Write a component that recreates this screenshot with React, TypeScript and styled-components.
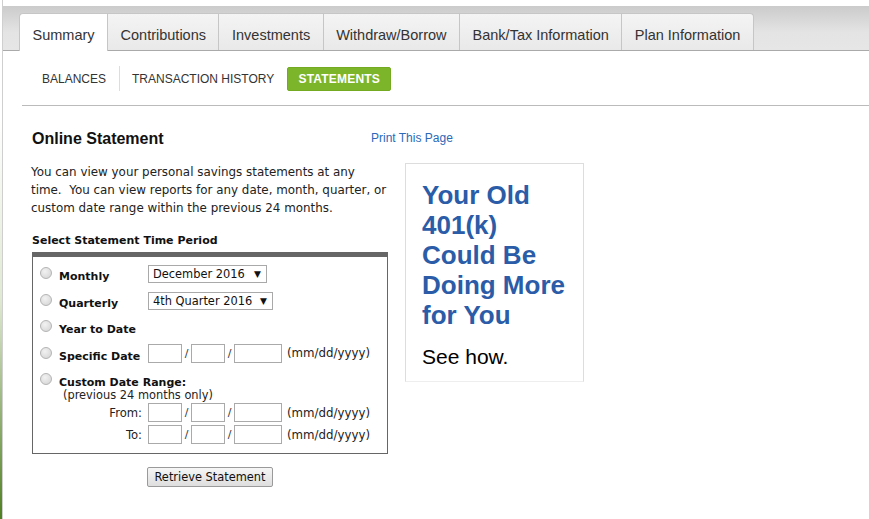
import React from "react";
import styled, { createGlobalStyle } from "styled-components";

const GlobalStyle = createGlobalStyle`
  html, body {
    margin: 0;
    padding: 0;
  }
  body {
    background: linear-gradient(to bottom, #ffffff 0, #ffffff 120px, #dfe9d2 300px, #4f7f22 519px);
    font-family: "Liberation Sans", Arial, sans-serif;
    color: #333;
  }
`;

const Page = styled.div`
  margin-left: 2px;
  min-height: 519px;
  background: #fff;
  border-left: 1px solid #cfcfcf;
  padding-top: 6px;
  box-sizing: border-box;
`;

const TabBar = styled.div`
  height: 45px;
  box-sizing: border-box;
  padding: 8px 0 0 16px;
  background: linear-gradient(to bottom, #cbcbcb, #e4e4e4 60%, #e6e6e6);
  border-bottom: 1px solid #aaa;
  display: flex;
  align-items: flex-end;
`;

const Tab = styled.div<{ $active?: boolean; $first?: boolean; $last?: boolean }>`
  box-sizing: border-box;
  padding: 5px 12.5px 0;
  display: flex;
  align-items: center;
  font-size: 14.5px;
  color: #333;
  border: 1px solid #c6c6c6;
  border-left: ${(p) => (p.$first ? "1px solid #c6c6c6" : "none")};
  border-bottom: none;
  border-radius: ${(p) => (p.$first ? "4px 0 0 0" : p.$last ? "0 4px 0 0" : "0")};
  background: ${(p) => (p.$active ? "#fff" : "linear-gradient(to bottom, #f4f4f4, #e9e9e9)")};
  margin-bottom: ${(p) => (p.$active ? "-1px" : "0")};
  height: ${(p) => (p.$active ? "38px" : "37px")};
`;

const SubNav = styled.div`
  display: flex;
  align-items: center;
  padding: 15px 0 0 39px;
  height: 25px;
`;

const SubLink = styled.div<{ $divider?: boolean }>`
  font-size: 12px;
  color: #333;
  text-transform: uppercase;
  padding-right: ${(p) => (p.$divider ? "13px" : "0")};
  margin-right: ${(p) => (p.$divider ? "12px" : "13px")};
  height: 25px;
  display: flex;
  align-items: center;
  border-right: ${(p) => (p.$divider ? "1px solid #ddd" : "none")};
`;

const SubActive = styled.div`
  font-size: 12px;
  font-weight: bold;
  color: #fff;
  background: #7db52a;
  border: 1px solid #74aa22;
  border-radius: 2px;
  height: 24px;
  box-sizing: border-box;
  width: 104px;
  display: flex;
  align-items: center;
  justify-content: center;
  letter-spacing: 0.2px;
`;

const Rule = styled.div`
  margin: 14px 0 0 19px;
  border-top: 1px solid #bbb;
`;

const Content = styled.div`
  padding: 23px 0 0 29px;
`;

const HeadRow = styled.div`
  display: grid;
  grid-template-columns: 339px auto;
  align-items: start;
`;

const Title = styled.h2`
  margin: 0;
  font-size: 16px;
  line-height: 19px;
  font-weight: bold;
  color: #111;
`;

const PrintLink = styled.a`
  margin-top: 2px;
  font-size: 12px;
  line-height: 14px;
  color: #2a6ab8;
  text-decoration: none;
`;

const Columns = styled.div`
  display: flex;
  gap: 17px;
  margin-top: 15px;
  align-items: flex-start;
`;

const LeftCol = styled.div`
  width: 356px;
`;

const Intro = styled.p`
  margin: 0 0 0 -1px;
  font-family: "DejaVu Sans", Verdana, sans-serif;
  font-size: 11.9px;
  line-height: 18px;
  color: #222;
  width: 362px;
`;

const SectionLabel = styled.div`
  margin-top: 17px;
  font-family: "DejaVu Sans", Verdana, sans-serif;
  font-size: 11px;
  font-weight: bold;
  color: #111;
`;

const PeriodBox = styled.div`
  margin-top: 5px;
  border: 1px solid #666;
  border-top: 5px solid #666;
  padding: 6px 0 7px 6px;
  display: flex;
  flex-direction: column;
`;

const OptionRow = styled.div`
  display: flex;
  align-items: flex-start;
  height: 26.5px;
`;

const Radio = styled.span`
  width: 12px;
  height: 12px;
  border-radius: 50%;
  box-sizing: border-box;
  border: 1px solid #b4b4b4;
  background: radial-gradient(circle at 40% 35%, #f2f2f2, #d2d2d2);
  margin: 4px 7px 0 1px;
`;

const OptLabel = styled.span<{ $auto?: boolean }>`
  font-family: "DejaVu Sans", Verdana, sans-serif;
  font-size: 11px;
  font-weight: bold;
  color: #111;
  width: ${(p) => (p.$auto ? "auto" : "89px")};
  margin-top: 7px;
`;

const FakeSelect = styled.div<{ $w: number }>`
  width: ${(p) => p.$w}px;
  height: 18px;
  margin-top: 2px;
  box-sizing: border-box;
  border: 1px solid #a9a9a9;
  display: flex;
  align-items: center;
  justify-content: space-between;
  padding: 0 5px 0 4px;
  font-family: "DejaVu Sans", Verdana, sans-serif;
  font-size: 11.4px;
  color: #111;
  span {
    font-size: 9px;
  }
`;

const Fields = styled.div<{ $top?: number }>`
  display: flex;
  align-items: center;
  margin-top: ${(p) => p.$top ?? 0}px;
`;

const DateInput = styled.div<{ $w: number }>`
  width: ${(p) => p.$w}px;
  height: 19px;
  box-sizing: border-box;
  border: 1px solid #aaa;
  background: #fff;
`;

const Slash = styled.span`
  font-family: "DejaVu Sans", Verdana, sans-serif;
  font-size: 11px;
  color: #333;
  width: 9px;
  text-align: center;
`;

const Hint = styled.span`
  font-family: "DejaVu Sans", Verdana, sans-serif;
  font-size: 11.8px;
  color: #222;
  margin-left: 5px;
`;

const SubNote = styled.div`
  font-family: "DejaVu Sans", Verdana, sans-serif;
  font-size: 11.4px;
  line-height: 13px;
  color: #222;
  padding-left: 24px;
  margin-top: -7px;
`;

const RangeRow = styled.div`
  display: flex;
  align-items: center;
  height: 22px;
`;

const RangeLabel = styled.span`
  width: 109px;
  text-align: right;
  padding-right: 6px;
  box-sizing: border-box;
  font-family: "DejaVu Sans", Verdana, sans-serif;
  font-size: 11.6px;
  color: #222;
`;

const ButtonRow = styled.div`
  display: flex;
  justify-content: center;
  margin-top: 13px;
`;

const Button = styled.button`
  width: 126px;
  height: 20px;
  padding: 0;
  border: 1px solid #9a9a9a;
  border-radius: 2px;
  background: linear-gradient(to bottom, #f6f6f6, #dedede);
  font-family: "DejaVu Sans", Verdana, sans-serif;
  font-size: 11.4px;
  color: #111;
`;

const Promo = styled.div`
  width: 179px;
  height: 219px;
  box-sizing: border-box;
  border: 1px solid #ddd;
  border-bottom-color: #eee;
  padding: 16px 10px 0 16px;
`;

const PromoHead = styled.div`
  font-size: 26px;
  font-weight: bold;
  line-height: 30px;
  color: #2a5ca8;
`;

const PromoSub = styled.div`
  margin-top: 15px;
  font-size: 21px;
  color: #000;
`;

const tabs = ["Summary", "Contributions", "Investments", "Withdraw/Borrow", "Bank/Tax Information", "Plan Information"];

const DateFields = ({ top }: { top?: number }) => (
  <Fields $top={top}>
    <DateInput $w={34} />
    <Slash>/</Slash>
    <DateInput $w={34} />
    <Slash>/</Slash>
    <DateInput $w={48} />
    <Hint>(mm/dd/yyyy)</Hint>
  </Fields>
);

const App = () => {
  return (
    <>
      <GlobalStyle />
      <Page>
        <TabBar>
          {tabs.map((t, i) => (
            <Tab key={t} $active={i === 0} $first={i === 0} $last={i === tabs.length - 1}>
              {t}
            </Tab>
          ))}
        </TabBar>
        <SubNav>
          <SubLink $divider>Balances</SubLink>
          <SubLink>Transaction History</SubLink>
          <SubActive>STATEMENTS</SubActive>
        </SubNav>
        <Rule />
        <Content>
          <HeadRow>
            <Title>Online Statement</Title>
            <PrintLink href="#">Print This Page</PrintLink>
          </HeadRow>
          <Columns>
            <LeftCol>
              <Intro>
                You can view your personal savings statements at any time.&nbsp; You can view reports for any date,
                month, quarter, or custom date range within the previous 24 months.
              </Intro>
              <SectionLabel>Select Statement Time Period</SectionLabel>
              <PeriodBox>
                <OptionRow>
                  <Radio />
                  <OptLabel>Monthly</OptLabel>
                  <FakeSelect $w={119}>
                    December 2016 <span>▼</span>
                  </FakeSelect>
                </OptionRow>
                <OptionRow>
                  <Radio />
                  <OptLabel>Quarterly</OptLabel>
                  <FakeSelect $w={125}>
                    4th Quarter 2016 <span>▼</span>
                  </FakeSelect>
                </OptionRow>
                <OptionRow>
                  <Radio />
                  <OptLabel>Year to Date</OptLabel>
                </OptionRow>
                <OptionRow>
                  <Radio />
                  <OptLabel>Specific Date</OptLabel>
                  <DateFields top={1} />
                </OptionRow>
                <OptionRow>
                  <Radio />
                  <OptLabel $auto>Custom Date Range:</OptLabel>
                </OptionRow>
                <SubNote>(previous 24 months only)</SubNote>
                <RangeRow>
                  <RangeLabel>From:</RangeLabel>
                  <DateFields />
                </RangeRow>
                <RangeRow>
                  <RangeLabel>To:</RangeLabel>
                  <DateFields />
                </RangeRow>
              </PeriodBox>
              <ButtonRow>
                <Button>Retrieve Statement</Button>
              </ButtonRow>
            </LeftCol>
            <Promo>
              <PromoHead>
                Your Old
                <br />
                401(k)
                <br />
                Could Be
                <br />
                Doing More
                <br />
                for You
              </PromoHead>
              <PromoSub>See how.</PromoSub>
            </Promo>
          </Columns>
        </Content>
      </Page>
    </>
  );
};

export default App;
